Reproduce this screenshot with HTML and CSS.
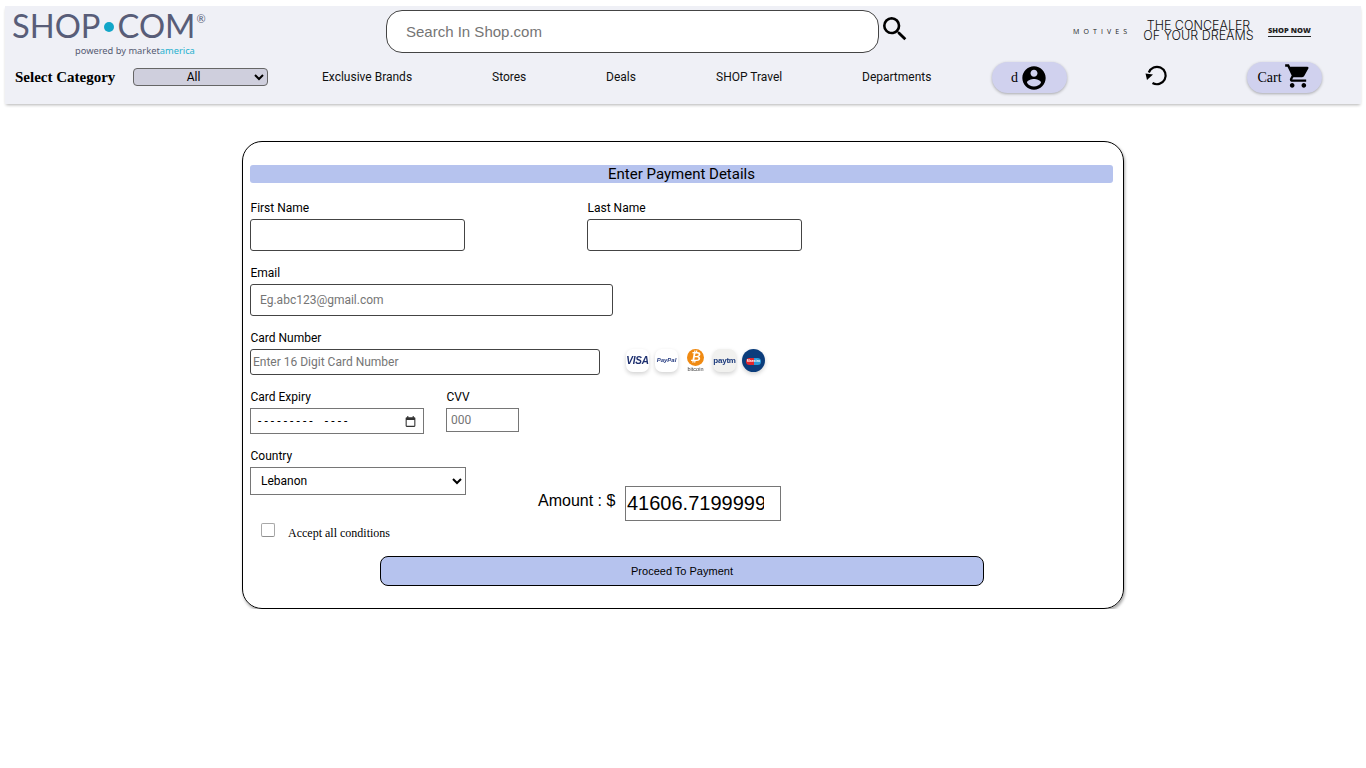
FILE: index.html
```html
<!DOCTYPE html>
<html lang="en">
<head>
    <meta charset="UTF-8">
    <title>Payment - Shop.com</title>
    <link rel="stylesheet" href="styles.css">
</head>
<body>
    <header class="topbar">
        <div class="top-row">
            <div class="logo">
                <div class="logo-main">SHOP<span class="logo-dot"></span>COM<span class="logo-reg">®</span></div>
                <div class="logo-sub">powered by market<span>america</span></div>
            </div>
            <div class="search">
                <input type="text" class="search-input" placeholder="Search In Shop.com">
                <svg class="search-icon" viewBox="0 0 24 24"><path d="M15.5 14h-.79l-.28-.27A6.471 6.471 0 0 0 16 9.5 6.5 6.5 0 1 0 9.5 16c1.61 0 3.09-.59 4.23-1.57l.27.28v.79l5 4.99L20.49 19l-4.99-5zm-6 0C7.01 14 5 11.99 5 9.5S7.01 5 9.5 5 14 7.01 14 9.5 11.99 14 9.5 14z"/></svg>
            </div>
            <div class="promo">
                <span class="promo-brand">MOTIVES</span>
                <span class="promo-text">THE CONCEALER<br>OF YOUR DREAMS</span>
                <span class="promo-link">SHOP NOW</span>
            </div>
        </div>
        <div class="nav-row">
            <b class="cat-label">Select Category</b>
            <select class="cat-select"><option>All</option></select>
            <a class="nav-link link-brands">Exclusive Brands</a>
            <a class="nav-link link-stores">Stores</a>
            <a class="nav-link link-deals">Deals</a>
            <a class="nav-link link-travel">SHOP Travel</a>
            <a class="nav-link link-dept">Departments</a>
            <div class="pill pill-user">d
                <svg class="pill-icon" viewBox="0 0 24 24"><path d="M12 2C6.48 2 2 6.48 2 12s4.48 10 10 10 10-4.48 10-10S17.52 2 12 2zm0 3c1.66 0 3 1.34 3 3s-1.34 3-3 3-3-1.34-3-3 1.34-3 3-3zm0 14.2a7.2 7.2 0 0 1-6-3.22c.03-1.99 4-3.08 6-3.08 1.99 0 5.97 1.09 6 3.08a7.2 7.2 0 0 1-6 3.22z"/></svg>
            </div>
            <svg class="history" viewBox="0 0 28 28"><path d="M5.800 10.500A8.700 8.700 0 1 1 9.500 21" fill="none" stroke="black" stroke-width="2.200"/><path d="M2.500 11.500L10 12.500 4 18z"/></svg>
            <div class="pill pill-cart">Cart
                <svg class="pill-icon" viewBox="0 0 24 24"><path d="M7 18c-1.100 0-1.990.9-1.990 2S5.900 22 7 22s2-.9 2-2-.9-2-2-2zM1 2v2h2l3.600 7.590-1.350 2.450c-.16.28-.25.61-.25.96 0 1.100.9 2 2 2h12v-2H7.420c-.14 0-.25-.11-.25-.25l.03-.12.9-1.630h7.450c.75 0 1.410-.41 1.750-1.030l3.580-6.490A1 1 0 0 0 20 4H5.210l-.94-2H1zm16 16c-1.100 0-1.990.9-1.990 2s.89 2 1.990 2 2-.9 2-2-.9-2-2-2z"/></svg>
            </div>
        </div>
    </header>

    <main class="pay-card">
        <h2 class="pay-title">Enter Payment Details</h2>

        <div class="row row-names">
            <div class="field field-first">
                <label>First Name</label>
                <input type="text" class="inp inp-round inp-name">
            </div>
            <div class="field">
                <label>Last Name</label>
                <input type="text" class="inp inp-round inp-name">
            </div>
        </div>

        <div class="field field-email">
            <label>Email</label>
            <input type="text" class="inp inp-round inp-email" placeholder="Eg.abc123@gmail.com">
        </div>

        <div class="field field-card">
            <label>Card Number</label>
            <div class="card-line">
                <input type="text" class="inp inp-round inp-card" placeholder="Enter 16 Digit Card Number">
                <div class="pay-icons">
                    <span class="pay-icon visa">VISA</span>
                    <span class="pay-icon paypal">PayPal</span>
                    <span class="pay-icon bitcoin"><i>₿</i><em>bitcoin</em></span>
                    <span class="pay-icon paytm">paytm</span>
                    <span class="pay-icon maestro">Maestro</span>
                </div>
            </div>
        </div>

        <div class="row row-expiry">
            <div class="field field-expiry">
                <label>Card Expiry</label>
                <div class="inp inp-expiry">
                    <span class="expiry-dashes">--------- ----</span>
                    <svg class="expiry-icon" viewBox="0 0 24 24"><path d="M19 4h-1V2h-2v2H8V2H6v2H5a2 2 0 0 0-2 2v14a2 2 0 0 0 2 2h14a2 2 0 0 0 2-2V6a2 2 0 0 0-2-2zm0 16H5V9h14v11z"/></svg>
                </div>
            </div>
            <div class="field">
                <label>CVV</label>
                <input type="text" class="inp inp-cvv" placeholder="000">
            </div>
        </div>

        <div class="row row-bottom">
            <div class="col-country">
                <div class="field">
                    <label>Country</label>
                    <select class="inp inp-country"><option>Lebanon</option></select>
                </div>
                <div class="accept">
                    <input type="checkbox" class="accept-box">
                    <span>Accept all conditions</span>
                </div>
            </div>
            <div class="amount">
                <span class="amount-label">Amount : $</span>
                <input type="number" class="inp inp-amount" value="41606.71999999">
            </div>
        </div>

        <button class="proceed">Proceed To Payment</button>
    </main>
</body>
</html>
```

FILE: styles.css
```css
* {
    box-sizing: border-box;
}
body {
    margin: 0;
    background-color: white;
    font-family: Roboto, sans-serif;
    color: black;
}

/* header */
.topbar {
    margin: 6px 5px 0;
    height: 98px;
    background-color: #eff0f6;
    box-shadow: 0 2px 3px -1px rgba(0, 0, 0, 0.3);
}
.top-row {
    display: flex;
    height: 56px;
}
.logo {
    width: 381px;
    padding: 5px 0 0 8px;
}
.logo-main {
    display: flex;
    align-items: center;
    height: 30px;
    margin-left: -1px;
    font-family: Lato, sans-serif;
    font-size: 32.700px;
    line-height: 30px;
    color: #585d78;
}
.logo-dot {
    width: 10px;
    height: 10px;
    margin: 2px 4px 0 3px;
    border-radius: 50%;
    background-color: #12a6c8;
}
.logo-reg {
    align-self: flex-start;
    font-size: 11px;
    line-height: 12px;
    margin: 2px 0 0 1px;
}
.logo-sub {
    margin: 3px 0 0 62px;
    font-family: "Noto Sans", sans-serif;
    font-size: 9.300px;
    line-height: 13px;
    color: #555a72;
}
.logo-sub span {
    color: #27b1cf;
}
.search {
    display: flex;
    align-items: flex-start;
    width: 687px;
    padding-top: 4px;
}
.search-input {
    width: 493px;
    height: 43px;
    padding: 0 19px;
    border: 1px solid #444;
    border-radius: 16px;
    background-color: white;
    font-family: "Liberation Sans", sans-serif;
    font-size: 15px;
    outline: none;
}
.search-input::placeholder {
    color: #757575;
}
.search-icon {
    width: 32px;
    height: 32px;
    margin: 3px 0 0 0;
}
.promo {
    display: flex;
    align-items: center;
    height: 50px;
    font-family: "Open Sans", sans-serif;
    color: #222;
}
.promo-brand {
    width: 70px;
    font-size: 7px;
    letter-spacing: 4.100px;
}
.promo-text {
    width: 111px;
    margin: 0 14px 0 0;
    font-family: Inter, sans-serif;
    font-size: 12.500px;
    font-weight: 300;
    line-height: 10px;
    white-space: nowrap;
    text-align: center;
    color: #111;
}
.promo-link {
    font-size: 7.500px;
    font-weight: 800;
    padding-bottom: 1px;
    border-bottom: 1px solid #222;
}
.nav-row {
    display: flex;
    align-items: center;
    height: 30px;
    font-size: 12px;
}
.cat-label {
    width: 128px;
    padding-left: 10px;
    font-family: "Liberation Serif", serif;
    font-size: 15px;
}
.cat-select {
    width: 135px;
    height: 18px;
    padding: 0 2px 0 0;
    border: 1px solid #666;
    border-radius: 4px;
    background-color: #cfcfdd;
    font-family: Roboto, sans-serif;
    font-size: 12px;
    text-align: center;
}
.nav-link {
    color: #111;
}
.link-brands {
    width: 224px;
    padding-left: 54px;
}
.link-stores {
    width: 114px;
}
.link-deals {
    width: 110px;
}
.link-travel {
    width: 146px;
}
.link-dept {
    width: 130px;
}
.pill {
    display: flex;
    align-items: center;
    justify-content: center;
    width: 75px;
    height: 31px;
    margin-top: 1px;
    border-radius: 16px;
    background-color: #d0d1ee;
    box-shadow: 0 1px 3px rgba(0, 0, 0, 0.3);
    font-family: "Liberation Serif", serif;
    font-size: 14px;
}
.pill-icon {
    width: 28px;
    height: 28px;
    margin-left: 2px;
}
.pill-cart .pill-icon {
    margin-bottom: 3px;
}
.history {
    width: 28px;
    height: 28px;
    margin: -2px 76px 0 76px;
}

/* payment form */
.pay-card {
    width: 882px;
    height: 468px;
    margin: 37px 0 0 242px;
    padding: 23px 10px 0 7px;
    border: 1px solid black;
    border-radius: 20px;
    box-shadow: 1px 2px 3px rgba(0, 0, 0, 0.35);
}
.pay-title {
    height: 18px;
    margin: 0 0 16px;
    border-radius: 3px;
    background-color: #b6c3ee;
    font-size: 15px;
    font-weight: 400;
    line-height: 18px;
    text-align: center;
}
.row {
    display: flex;
}
.field label {
    display: block;
    padding-left: 0.500px;
    height: 20px;
    font-size: 12px;
    line-height: 18px;
}
.inp {
    display: block;
    border: 1px solid #767676;
    background-color: white;
    font-family: Roboto, sans-serif;
    font-size: 12px;
}
.inp::placeholder {
    color: #757575;
}
.inp-round {
    border-radius: 3px;
    border-color: #444;
}
.field-first {
    width: 337px;
}
.inp-name {
    width: 215px;
    height: 32px;
}
.field-email {
    margin-top: 13px;
}
.inp-email {
    width: 363px;
    height: 32px;
    padding: 0 9px;
}
.field-card {
    margin-top: 13px;
}
.card-line {
    display: flex;
    align-items: center;
}
.inp-card {
    width: 350px;
    height: 26px;
    padding: 0 2px;
}
.pay-icons {
    display: flex;
    gap: 6px;
    margin: -4px 0 0 26px;
    filter: blur(0.300px);
}
.pay-icon {
    display: flex;
    align-items: center;
    justify-content: center;
    flex-direction: column;
    width: 23px;
    height: 23px;
    border-radius: 7px;
    background-color: white;
    box-shadow: 0 2px 4px rgba(0, 0, 0, 0.18);
    font-family: "Liberation Sans", sans-serif;
    font-weight: bold;
    font-style: italic;
    overflow: hidden;
}
.visa {
    font-size: 10px;
    letter-spacing: -0.200px;
    color: #1d2f6f;
}
.paypal {
    font-size: 6px;
    color: #253b80;
}
.bitcoin {
    background: none;
    box-shadow: none;
    border-radius: 0;
}
.bitcoin i {
    display: block;
    flex: none;
    width: 17px;
    height: 17px;
    border-radius: 50%;
    background-color: #f08a12;
    color: white;
    font-size: 12px;
    line-height: 17px;
    text-align: center;
}
.bitcoin em {
    font-size: 5.500px;
    font-weight: normal;
    font-style: normal;
    line-height: 6px;
    color: #333;
}
.paytm {
    background-color: #f1f1ef;
    font-size: 8px;
    font-style: normal;
    letter-spacing: -0.200px;
    color: #1b3a7c;
}
.maestro {
    border-radius: 50%;
    background-color: #0b3d7c;
    font-size: 3.500px;
    font-style: normal;
    color: white;
}
.maestro::before {
    content: "";
    flex: none;
    width: 15px;
    height: 7px;
    margin-bottom: -6px;
    border-radius: 4px;
    background: linear-gradient(90deg, #e2262c 50%, #2b9bd8 50%);
}
.row-expiry {
    margin-top: 13px;
}
.field-expiry {
    width: 196px;
}
.inp-expiry {
    display: flex;
    align-items: center;
    justify-content: space-between;
    width: 174px;
    height: 26px;
    padding: 0 6px 0 7px;
}
.expiry-dashes {
    font-size: 12px;
    letter-spacing: 3.100px;
    word-spacing: 3px;
    white-space: nowrap;
}
.expiry-icon {
    width: 13px;
    height: 13px;
    fill: #333;
}
.inp-cvv {
    width: 73px;
    height: 24px;
    padding: 0 4px;
}
.row-bottom {
    margin-top: 13px;
}
.col-country {
    width: 288px;
}
.inp-country {
    width: 216px;
    height: 28px;
    padding-left: 6px;
}
.accept {
    display: flex;
    align-items: center;
    height: 16px;
    margin: 27px 0 0 11px;
    font-family: "Liberation Serif", serif;
    font-size: 12px;
}
.accept-box {
    appearance: none;
    width: 14px;
    height: 14px;
    margin: 0 13px 0 0;
    border: 1px solid #a8a8a8;
    border-bottom-color: #8f8f8f;
    border-radius: 2px;
    background-color: white;
}
.accept span {
    margin-top: 6px;
}
.amount {
    display: flex;
    align-items: flex-start;
    padding-top: 39px;
}
.amount-label {
    width: 87px;
    font-family: "Liberation Sans", sans-serif;
    font-size: 16px;
    line-height: 30px;
}
.inp-amount {
    width: 156px;
    height: 35px;
    padding: 1px 1px;
    font-family: "Liberation Sans", sans-serif;
    font-size: 20px;
}
.proceed {
    display: block;
    width: 604px;
    height: 30px;
    margin: 18px 0 0 130px;
    border: 1px solid black;
    border-radius: 8px;
    background-color: #b6c3ee;
    font-family: "Liberation Sans", sans-serif;
    font-size: 11px;
}
```
